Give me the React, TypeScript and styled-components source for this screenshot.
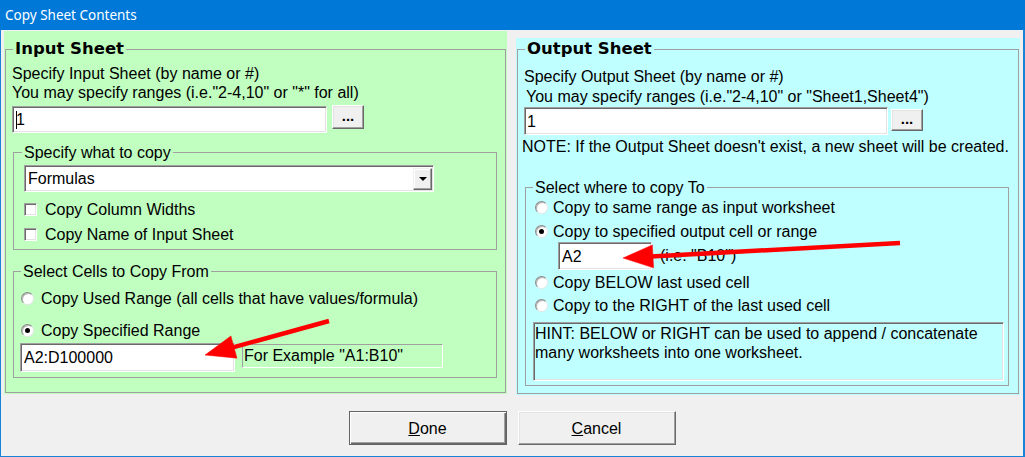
import React from "react";
import styled, { createGlobalStyle } from "styled-components";

const GlobalStyle = createGlobalStyle`
  html, body {
    margin: 0;
    padding: 0;
    background: #f0f0f0;
  }
  body {
    font-family: "Liberation Sans", Arial, sans-serif;
  }
`;

const Window = styled.div`
  position: relative;
  box-sizing: border-box;
  width: 1025px;
  height: 457px;
  padding: 0 2px 1px 1px;
  background: #1883d7;
  display: flex;
  flex-direction: column;
  overflow: hidden;
`;

const TitleBar = styled.div`
  flex: none;
  height: 30px;
  margin: 0 -2px 0 -1px;
  padding-left: 5px;
  background: #0078d7;
  color: #fff;
  display: flex;
  align-items: center;
  font: 13.5px "Noto Sans", "Open Sans", sans-serif;
`;

const Body = styled.div`
  flex: 1;
  background: #f0f0f0;
  padding: 0 3px;
  display: flex;
  flex-direction: column;
  color: #000;
  font: 16px/19px "Liberation Sans", Arial, sans-serif;
`;

const PanelRow = styled.div`
  display: flex;
  align-items: flex-start;
  gap: 9px;
`;

const Panel = styled.div<{ $bg: string; $width: number; $height: number; $top: number; $padTop: number }>`
  box-sizing: border-box;
  width: ${p => p.$width}px;
  height: ${p => p.$height}px;
  margin-top: ${p => p.$top}px;
  padding: ${p => p.$padTop}px 1px 1px;
  background: ${p => p.$bg};
  display: flex;
  flex-direction: column;
`;

const Frame = styled.fieldset<{ $pad: string; $mt?: number }>`
  margin: ${p => p.$mt ?? 0}px 0 0 0;
  min-width: 0;
  padding: ${p => p.$pad};
  border: 1px solid #a0a0a0;
  display: flex;
  flex-direction: column;
`;

const OuterFrame = styled(Frame)`
  flex: 1;
`;

const SubFrame = styled(Frame)`
  margin-left: 1px;
`;

const Caption = styled.legend<{ $bold?: boolean; $shift: number }>`
  padding: 0 2px;
  margin-left: ${p => p.$shift}px;
  font: ${p =>
    p.$bold
      ? `bold 16.5px/18px "DejaVu Sans", Verdana, sans-serif`
      : `16px/19px "Liberation Sans", Arial, sans-serif`};
`;

const Line = styled.div<{ $lh?: number; $indent?: number; $mt?: number }>`
  line-height: ${p => p.$lh ?? 19}px;
  margin-left: ${p => p.$indent ?? 0}px;
  margin-top: ${p => p.$mt ?? 0}px;
  white-space: nowrap;
`;

const Row = styled.div<{ $mt?: number }>`
  display: flex;
  align-items: flex-start;
  margin-top: ${p => p.$mt ?? 0}px;
`;

const TextBox = styled.div<{ $w: number; $h: number; $ml?: number; $pad?: number }>`
  box-sizing: border-box;
  width: ${p => p.$w}px;
  height: ${p => p.$h}px;
  margin-left: ${p => p.$ml ?? 0}px;
  padding-left: ${p => p.$pad ?? 3}px;
  background: #fff;
  border: 1px solid;
  border-color: #a0a0a0 #ffffff #ffffff #a0a0a0;
  box-shadow: inset 1px 1px 0 #696969, inset -1px -1px 0 #e3e3e3;
  display: flex;
  align-items: center;
  white-space: nowrap;
`;

const Caret = styled.span`
  display: inline-block;
  width: 1px;
  height: 18px;
  background: #000;
  margin-right: -1px;
`;

const DotsButton = styled.div<{ $w: number; $h: number; $ml: number; $mt: number }>`
  box-sizing: border-box;
  width: ${p => p.$w}px;
  height: ${p => p.$h}px;
  margin-left: ${p => p.$ml}px;
  margin-top: ${p => p.$mt}px;
  background: #f0f0f0;
  border: 1px solid;
  border-color: #ffffff #696969 #696969 #ffffff;
  box-shadow: inset -1px -1px 0 #a0a0a0, inset 1px 1px 0 #e3e3e3;
  display: flex;
  align-items: center;
  justify-content: center;
  font-weight: bold;
  font-size: 15px;
  line-height: 1;
  padding-bottom: 4px;
`;

const Combo = styled(TextBox)`
  padding-right: 1px;
`;

const ComboButton = styled.div`
  margin-left: auto;
  box-sizing: border-box;
  width: 19px;
  height: 22px;
  background: #f0f0f0;
  border: 1px solid;
  border-color: #f0f0f0 #696969 #696969 #f0f0f0;
  box-shadow: inset -1px -1px 0 #a0a0a0, inset 1px 1px 0 #ffffff;
  display: flex;
  align-items: center;
  justify-content: center;

  &::after {
    content: "";
    border-left: 4px solid transparent;
    border-right: 4px solid transparent;
    border-top: 4px solid #000;
  }
`;

const OptionRow = styled.div<{ $h: number; $mt?: number; $ml?: number; $gap: number }>`
  display: flex;
  align-items: center;
  gap: ${p => p.$gap}px;
  height: ${p => p.$h}px;
  margin-top: ${p => p.$mt ?? 0}px;
  margin-left: ${p => p.$ml ?? 0}px;
  white-space: nowrap;
`;

const CheckBox = styled.span`
  box-sizing: border-box;
  width: 13px;
  height: 13px;
  flex: none;
  background: #fff;
  border: 1px solid;
  border-color: #a0a0a0 #ffffff #ffffff #a0a0a0;
  box-shadow: inset 1px 1px 0 #696969, inset -1px -1px 0 #e3e3e3;
`;

const RadioDot = styled.span<{ $on?: boolean }>`
  box-sizing: border-box;
  width: 13px;
  height: 13px;
  flex: none;
  border-radius: 50%;
  background: #fff;
  border: 1px solid;
  border-color: #8a8a8a #e6e6e6 #e6e6e6 #8a8a8a;
  box-shadow: inset 1px 1px 0 #b4b4b4;
  display: flex;
  align-items: center;
  justify-content: center;

  &::after {
    content: "";
    display: ${p => (p.$on ? "block" : "none")};
    width: 5px;
    height: 5px;
    border-radius: 50%;
    background: #000;
  }
`;

const SunkenLabel = styled.div<{ $w: number; $h: number; $ml?: number; $mt?: number }>`
  box-sizing: border-box;
  width: ${p => p.$w}px;
  height: ${p => p.$h}px;
  margin-left: ${p => p.$ml ?? 0}px;
  margin-top: ${p => p.$mt ?? 0}px;
  padding-left: 1px;
  border: 1px solid;
  border-color: #a0a0a0 #ffffff #ffffff #a0a0a0;
  white-space: nowrap;
  line-height: 21px;
`;

const HintBox = styled.div`
  box-sizing: border-box;
  width: 471px;
  height: 59px;
  margin-top: 7px;
  margin-left: -2px;
  padding: 1px 0 0 1px;
  border: 1px solid;
  border-color: #a0a0a0 #ffffff #ffffff #a0a0a0;
  box-shadow: inset 1px 1px 0 #696969, inset -1px -1px 0 #e3e3e3;
`;

const InlineNote = styled.span`
  margin-left: 8px;
  line-height: 28px;
  white-space: nowrap;
`;

const ButtonRow = styled.div`
  display: flex;
  justify-content: center;
  gap: 11px;
  margin-top: 16px;
`;

const DialogButton = styled.div<{ $default?: boolean }>`
  box-sizing: border-box;
  width: 158px;
  height: 34px;
  background: #f0f0f0;
  border: 1px solid;
  border-color: ${p => (p.$default ? "#646464" : "#ffffff #696969 #696969 #ffffff")};
  box-shadow: ${p =>
    p.$default
      ? "inset 1px 1px 0 #ffffff, inset -1px -1px 0 #696969, inset -2px -2px 0 #a0a0a0"
      : "inset -1px -1px 0 #a0a0a0, inset 1px 1px 0 #e3e3e3"};
  display: flex;
  align-items: center;
  justify-content: center;
  font-size: 16px;
`;

const ArrowLayer = styled.svg`
  position: absolute;
  left: 0;
  top: 0;
  pointer-events: none;
`;

type Pt = [number, number];

function RedArrow({ tail, tip }: { tail: Pt; tip: Pt }) {
  const dx = tip[0] - tail[0];
  const dy = tip[1] - tail[1];
  const len = Math.hypot(dx, dy);
  const ux = dx / len;
  const uy = dy / len;
  const headLen = 30;
  const half = 11.5;
  const bx = tip[0] - ux * headLen;
  const by = tip[1] - uy * headLen;
  const w1: Pt = [bx - uy * half, by + ux * half];
  const w2: Pt = [bx + uy * half, by - ux * half];
  return (
    <g fill="#ff0000" stroke="#ff0000">
      <line x1={tail[0]} y1={tail[1]} x2={bx + ux * 2} y2={by + uy * 2} strokeWidth={4.5} />
      <polygon points={`${tip[0]},${tip[1]} ${w1[0]},${w1[1]} ${w2[0]},${w2[1]}`} strokeWidth={0.5} />
    </g>
  );
}

function Check({ label }: { label: string }) {
  return (
    <>
      <CheckBox />
      <span>{label}</span>
    </>
  );
}

export default function App() {
  return (
    <>
      <GlobalStyle />
      <Window>
        <TitleBar>Copy Sheet Contents</TitleBar>
        <Body>
          <PanelRow>
            <Panel $bg="#c0ffc0" $width={503} $height={363} $top={1} $padTop={9}>
              <OuterFrame $pad="6px 8px 0 6px">
                <Caption $bold $shift={1}>Input Sheet</Caption>
                <Line>Specify Input Sheet (by name or #)</Line>
                <Line>You may specify ranges (i.e."2-4,10" or "*" for all)</Line>
                <Row $mt={4}>
                  <TextBox $w={315} $h={27}>
                    <Caret />1
                  </TextBox>
                  <DotsButton $w={32} $h={24} $ml={5} $mt={-1}>...</DotsButton>
                </Row>

                <SubFrame $mt={10} $pad="3px 0 2px 10px">
                  <Caption $shift={-2}>Specify what to copy</Caption>
                  <Combo $w={410} $h={27}>
                    Formulas
                    <ComboButton />
                  </Combo>
                  <OptionRow $h={25} $mt={5} $gap={8}>
                    <Check label="Copy Column Widths" />
                  </OptionRow>
                  <OptionRow $h={25} $gap={8}>
                    <Check label="Copy Name of Input Sheet" />
                  </OptionRow>
                </SubFrame>

                <SubFrame $mt={12} $pad="5px 0 5px 6px">
                  <Caption $shift={1}>Select Cells to Copy From</Caption>
                  <OptionRow $h={25} $ml={1} $gap={7}>
                    <RadioDot />
                    <span>Copy Used Range (all cells that have values/formula)</span>
                  </OptionRow>
                  <OptionRow $h={25} $mt={7} $ml={1} $gap={7}>
                    <RadioDot $on />
                    <span>Copy Specified Range</span>
                  </OptionRow>
                  <Row>
                    <TextBox $w={215} $h={29} $pad={3}>A2:D100000</TextBox>
                    <SunkenLabel $w={201} $h={24} $ml={7} $mt={1}>
                      For Example "A1:B10"
                    </SunkenLabel>
                  </Row>
                </SubFrame>
              </OuterFrame>
            </Panel>

            <Panel $bg="#c0ffff" $width={504} $height={357} $top={8} $padTop={2}>
              <OuterFrame $pad="9px 9px 0 6px">
                <Caption $bold $shift={1}>Output Sheet</Caption>
                <Line $lh={20}>Specify Output Sheet (by name or #)</Line>
                <Line $lh={20} $indent={2}>
                  You may specify ranges (i.e."2-4,10" or "Sheet1,Sheet4")
                </Line>
                <Row>
                  <TextBox $w={364} $h={28} $pad={2}>1</TextBox>
                  <DotsButton $w={32} $h={22} $ml={3} $mt={2}>...</DotsButton>
                </Row>
                <Line $lh={20} $indent={-2} $mt={2}>
                  NOTE: If the Output Sheet doesn't exist, a new sheet will be created.
                </Line>

                <SubFrame $mt={21} $pad="0 0 4px 9px">
                  <Caption $shift={-2}>Select where to copy To</Caption>
                  <OptionRow $h={20} $gap={5}>
                    <RadioDot />
                    <span>Copy to same range as input worksheet</span>
                  </OptionRow>
                  <OptionRow $h={20} $mt={4} $gap={5}>
                    <RadioDot $on />
                    <span>Copy to specified output cell or range</span>
                  </OptionRow>
                  <Row $mt={1}>
                    <TextBox $w={94} $h={28} $ml={23} $pad={3}>A2</TextBox>
                    <InlineNote>(i.e. "B10")</InlineNote>
                  </Row>
                  <OptionRow $h={20} $mt={2} $gap={5}>
                    <RadioDot />
                    <span>Copy BELOW last used cell</span>
                  </OptionRow>
                  <OptionRow $h={20} $mt={3} $gap={5}>
                    <RadioDot />
                    <span>Copy to the RIGHT of the last used cell</span>
                  </OptionRow>
                  <HintBox>
                    HINT: BELOW or RIGHT can be used to append / concatenate
                    <br />
                    many worksheets into one worksheet.
                  </HintBox>
                </SubFrame>
              </OuterFrame>
            </Panel>
          </PanelRow>

          <ButtonRow>
            <DialogButton $default>
              <span>
                <u>D</u>one
              </span>
            </DialogButton>
            <DialogButton>
              <span>
                <u>C</u>ancel
              </span>
            </DialogButton>
          </ButtonRow>
        </Body>

        <ArrowLayer width={1025} height={457} viewBox="0 0 1025 457">
          <RedArrow tail={[329, 321]} tip={[205, 355]} />
          <RedArrow tail={[900, 243]} tip={[623, 258]} />
        </ArrowLayer>
      </Window>
    </>
  );
}
